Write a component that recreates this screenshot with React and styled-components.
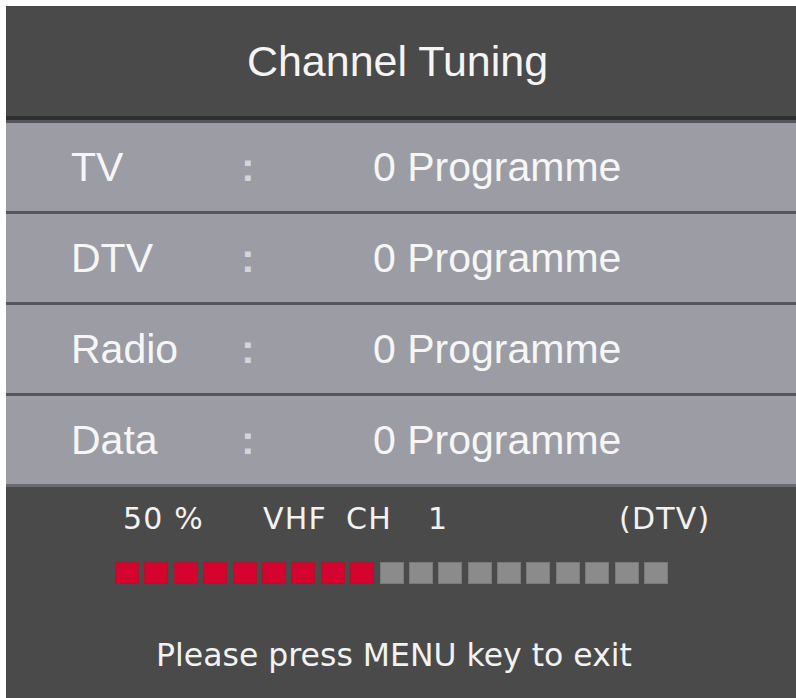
import React from "react";
import styled, { createGlobalStyle } from "styled-components";

const Global = createGlobalStyle`
  html, body { margin: 0; padding: 0; background: #ffffff; }
  body { width: 796px; height: 698px; overflow: hidden; }
`;

const Panel = styled.div`
  margin: 6px 0 0 6px;
  width: 790px;
  height: 692px;
  background: #4a4a4a;
  display: flex;
  flex-direction: column;
`;

const Header = styled.div`
  box-sizing: border-box;
  height: 114px;
  border-bottom: 4px solid #2f2f30;
  display: flex;
  align-items: center;
  justify-content: center;
  padding-right: 7px;
  font-family: "Liberation Sans", Arial, sans-serif;
  font-size: 43px;
  color: #f4f4f4;
`;

const List = styled.div`
  display: flex;
  flex-direction: column;
`;

const Row = styled.div`
  height: 88px;
  border-top: 3px solid #55565b;
  background: #9b9ca4;
  display: grid;
  grid-template-columns: 170px 132px 1fr;
  align-items: center;
  padding-left: 65px;
  font-family: "Liberation Sans", Arial, sans-serif;
  font-size: 41px;
  color: #f6f6f6;
`;

const Colon = styled.span`
  color: #d4d5da;
  font-weight: bold;
`;

const Footer = styled.div`
  flex: 1;
  border-top: 3px solid #6a6b70;
  display: flex;
  flex-direction: column;
  font-family: "DejaVu Sans", sans-serif;
  color: #f2f2f2;
`;

const Status = styled.div`
  display: grid;
  grid-template-columns: 140px 83px 82px 191px auto;
  padding-left: 117px;
  margin-top: 17px;
  font-size: 30px;
  line-height: 30px;
  letter-spacing: 1.2px;
`;

const Bar = styled.div`
  display: flex;
  gap: 5.4px;
  margin-top: 28px;
  padding-left: 109px;
`;

const Cell = styled.div`
  width: 24px;
  height: 22px;
  box-sizing: border-box;
  background: ${(p) => (p.$on ? "#d5042e" : "#8b8b8b")};
  border: 1px solid ${(p) => (p.$on ? "#b0122e" : "#7a7a7a")};
`;

const Exit = styled.div`
  margin-top: 56px;
  text-align: center;
  padding-right: 14px;
  font-size: 31.5px;
  line-height: 31px;
`;

const rows = ["TV", "DTV", "Radio", "Data"];

export default function App() {
  const cells = Array.from({ length: 19 }, (_, i) => i < 9);
  return (
    <>
      <Global />
      <Panel>
        <Header>Channel Tuning</Header>
        <List>
          {rows.map((r) => (
            <Row key={r}>
              <span>{r}</span>
              <Colon>:</Colon>
              <span>0 Programme</span>
            </Row>
          ))}
        </List>
        <Footer>
          <Status>
            <span>50 %</span>
            <span>VHF</span>
            <span>CH</span>
            <span>1</span>
            <span>(DTV)</span>
          </Status>
          <Bar>
            {cells.map((on, i) => (
              <Cell key={i} $on={on} />
            ))}
          </Bar>
          <Exit>Please press MENU key to exit</Exit>
        </Footer>
      </Panel>
    </>
  );
}
